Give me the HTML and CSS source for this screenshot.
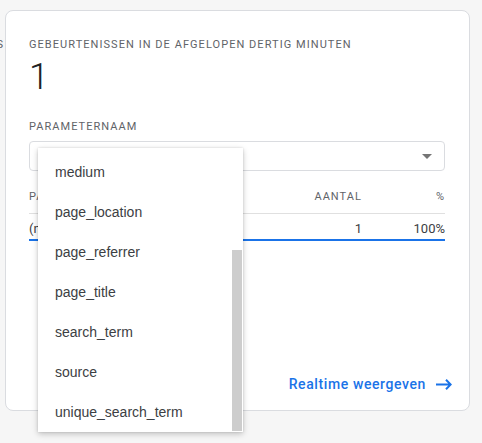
FILE: index.html
```html
<!DOCTYPE html>
<html lang="nl">
<head>
<meta charset="utf-8">
<title>Realtime</title>
<link rel="stylesheet" href="styles.css">
</head>
<body>
<div class="page">
  <div class="prev"><span>GEBRUIKERS</span></div>
  <div class="card">
    <div class="title">Gebeurtenissen in de afgelopen dertig minuten</div>
    <div class="count">1</div>
    <div class="label">Parameternaam</div>
    <div class="select-wrap">
      <div class="select">
        <svg class="caret" width="10" height="5" viewBox="0 0 10 5"><path d="M0 0h10L5 5z" fill="#757575"/></svg>
      </div>
      <div class="menu">
        <ul class="options">
          <li>medium</li>
          <li>page_location</li>
          <li>page_referrer</li>
          <li>page_title</li>
          <li>search_term</li>
          <li>source</li>
          <li>unique_search_term</li>
        </ul>
        <div class="track"><div class="thumb"></div></div>
      </div>
    </div>
    <div class="table">
      <div class="row head">
        <div class="cell">Parameterwaarde</div>
        <div class="cell num">Aantal</div>
        <div class="cell num">%</div>
      </div>
      <div class="row data">
        <div class="cell">(not set)</div>
        <div class="cell num">1</div>
        <div class="cell num">100%</div>
      </div>
    </div>
    <a class="link" href="#">Realtime weergeven
      <svg class="arrow" width="16" height="11" viewBox="0 0 16 11"><path d="M0 5.5h15M10 0.8l4.7 4.7-4.7 4.7" fill="none" stroke="#1a73e8" stroke-width="2"/></svg>
    </a>
  </div>
</div>
</body>
</html>
```
FILE: styles.css
```css
* { box-sizing: border-box; }
html, body { margin: 0; padding: 0; }
body {
  background: #f6f6f6;
  font-family: Roboto, "Liberation Sans", Arial, sans-serif;
  color: #202124;
  width: 482px;
  height: 443px;
  overflow: hidden;
}
.page {
  display: flex;
  padding-top: 10px;
}
.prev {
  width: 5px;
  padding-right: 1px;
  padding-top: 27px;
  overflow: hidden;
  display: flex;
  justify-content: flex-end;
  font-size: 11px;
  line-height: 16px;
  letter-spacing: 1px;
  color: #5f6368;
  white-space: nowrap;
}
.prev span { flex: none; }
.card {
  width: 465px;
  height: 401px;
  background: #fff;
  border: 1px solid #dadce0;
  border-radius: 8px;
  padding: 26px 24px 0 23px;
  display: flex;
  flex-direction: column;
}
.title, .label, .head {
  font-size: 11px;
  line-height: 16px;
  letter-spacing: 1.05px;
  text-transform: uppercase;
  color: #5f6368;
  font-weight: 400;
}
.count {
  margin-top: 2px;
  font-size: 36px;
  line-height: 44px;
  font-weight: 300;
  color: #202124;
}
.label { margin-top: 20px; }
.select-wrap {
  position: relative;
  margin-top: 6px;
}
.select {
  height: 30px;
  border: 1px solid #dadce0;
  border-radius: 4px;
  display: flex;
  align-items: center;
  justify-content: flex-end;
  padding-right: 12px;
}
.caret { display: block; }
.menu {
  position: absolute;
  left: 9px;
  top: 7px;
  width: 205px;
  height: 284px;
  background: #fff;
  box-shadow: 0 2px 6px rgba(0,0,0,0.22), 0 0 2px rgba(0,0,0,0.12);
  display: flex;
  z-index: 2;
}
.options {
  list-style: none;
  margin: 0;
  padding: 4px 0 0 0;
  flex: 1;
  font-family: "Liberation Sans", Arial, sans-serif;
  font-size: 14px;
  color: #3c4043;
}
.options li {
  height: 40px;
  line-height: 40px;
  padding-left: 17px;
}
.track {
  width: 11px;
  padding: 102px 1px 1px 0;
}
.thumb {
  height: 181px;
  background: #cdcdcd;
}
.row {
  display: grid;
  grid-template-columns: 1fr 100px 83px;
}
.head {
  padding: 18px 0 8px;
  border-bottom: 1px solid #e0e0e0;
}
.data {
  padding-top: 5px;
  font-size: 13px;
  line-height: 20px;
  color: #3c4043;
  border-bottom: 2px solid #1a73e8;
}
.num { text-align: right; }
.link {
  margin-top: auto;
  margin-bottom: 16px;
  align-self: flex-end;
  margin-right: -7px;
  display: flex;
  align-items: center;
  gap: 10px;
  color: #1a73e8;
  text-decoration: none;
  font-size: 14px;
  font-weight: 500;
  line-height: 20px;
  letter-spacing: 0.6px;
}
.arrow { display: block; }
```
